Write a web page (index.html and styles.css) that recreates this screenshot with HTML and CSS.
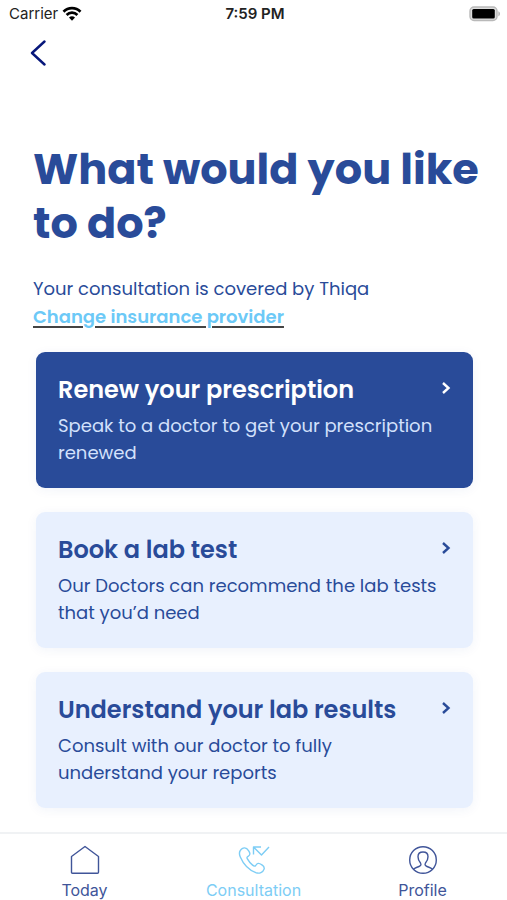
FILE: index.html
```html
<!DOCTYPE html>
<html lang="en">
<head>
<meta charset="utf-8">
<meta name="viewport" content="width=device-width, initial-scale=1">
<title>Consultation</title>
<link rel="stylesheet" href="styles.css">
</head>
<body>
<header>
  <div class="status">
    <div class="carrier">Carrier
      <svg width="20" height="16" viewBox="0 0 20 16" fill="none" stroke="#000" stroke-width="2.7" aria-hidden="true"><path d="M1.500 5.700C6.200.9 13.800.9 18.500 5.700"/><path d="M4.600 9c3-3.100 7.800-3.100 10.800 0"/><path d="M7 11.500c1.700-1.700 4.300-1.700 6 0l-3 3.300z" fill="#000" stroke="none"/></svg>
    </div>
    <div class="time">7:59 PM</div>
    <svg class="battery" width="32" height="16" viewBox="0 0 32 16" aria-hidden="true"><rect x="1" y="1" width="27" height="13.5" rx="4" fill="#ddd" stroke="#b9b9b9" stroke-width="1.4"/><rect x="3.2" y="3" width="22.6" height="9.5" rx="1.5"/><path d="M29.300 5.200c2.300.8 2.300 4.300 0 5.100z" fill="#b9b9b9"/></svg>
  </div>
  <button class="back" aria-label="Back"><svg width="16" height="26" viewBox="0 0 16 26" fill="none" stroke="#07177b" stroke-width="2.4" stroke-linecap="round" stroke-linejoin="round"><path d="M14.500 1.500 2 13l12.500 11.500"/></svg></button>
</header>
<main>
  <h1>What would you like to do?</h1>
  <p class="cover">Your consultation is covered by Thiqa<br><a href="#insurance">Change insurance provider</a></p>
  <div class="cards">
    <button class="card primary">
      <span class="title">Renew your prescription<svg class="chevron" width="10" height="14" viewBox="0 0 10 14"><path d="m2 2 5.500 5L2 12"/></svg></span>
      <span class="text">Speak to a doctor to get your prescription renewed</span>
    </button>
    <button class="card">
      <span class="title">Book a lab test<svg class="chevron" width="10" height="14" viewBox="0 0 10 14"><path d="m2 2 5.500 5L2 12"/></svg></span>
      <span class="text">Our Doctors can recommend the lab tests that you’d need</span>
    </button>
    <button class="card">
      <span class="title">Understand your lab results<svg class="chevron" width="10" height="14" viewBox="0 0 10 14"><path d="m2 2 5.500 5L2 12"/></svg></span>
      <span class="text">Consult with our doctor to fully<br>understand your reports</span>
    </button>
  </div>
</main>
<nav>
  <a href="#today"><svg width="30" height="30" viewBox="0 0 30 30"><path d="M1.500 11.500 15 1.500l13.500 10v15.700q0 1-1 1h-25q-1 0-1-1z"/></svg>Today</a>
  <a href="#consultation" class="active"><svg width="32" height="30" viewBox="0 0 32 30"><path d="M5.200 3.200C1.800 4.800.6 8 2.300 12c3 7 8.800 13 15.500 15.700 3.500 1.300 7.300-.4 8.300-3.600.6-2-.5-3.200-2.200-4.300-3.400-2.300-4.700-1.700-6.200.7-.7 1-1.700.8-3.100-.4-2.500-2.100-4-4-5.200-6.200-.7-1.200-.5-1.900.7-2.600 2.300-1.400 2.200-3 .6-5.500C9.100 3.300 7.400 2.300 5.200 3.200z"/><path d="M15.500 9.500V2H23M15.500 2l8 8L31 2"/></svg>Consultation</a>
  <a href="#profile"><svg width="30" height="30" viewBox="0 0 30 30"><circle cx="15" cy="15" r="13.300"/><path d="M5.500 24.300c1.500-1.600 3.500-2 5.500-2.800 2-.8 2.400-2 1.500-3.500-1.700-2-2.500-4-2.500-6.300C10 8.800 12 7 15 7s5 1.800 5 4.700c0 2.300-.8 4.300-2.500 6.300-.9 1.500-.5 2.700 1.500 3.500 2 .8 4 1.200 5.500 2.800"/></svg>Profile</a>
</nav>
</body>
</html>
```
FILE: styles.css
```css
* { box-sizing: border-box; }
body {
  margin: 0;
  min-height: 100vh;
  display: flex;
  flex-direction: column;
  background: #fff;
  color: #294b99;
  font-family: Poppins, Inter, sans-serif;
}
button { border: 0; background: none; font: inherit; color: inherit; cursor: pointer; }
svg { display: block; flex: none; }
.status {
  display: grid;
  grid-template-columns: 1fr auto 1fr;
  align-items: center;
  height: 28px;
  padding: 0 6px 0 9px;
  color: #222;
  font: 15px/28px Inter, sans-serif;
}
.carrier { display: flex; align-items: center; gap: 4px; }
.time { font-weight: 600; }
.battery { justify-self: end; }
.back { display: block; margin: 12px 0 0 30px; padding: 0; }
main { flex: 1; padding: 76px 24px 24px 33px; }
h1 { margin: 0 0 25px; font-size: 43px; line-height: 54px; font-weight: 700; }
.cover { margin: 0 0 21px; font-size: 18px; line-height: 28px; }
.cover a {
  color: #6cc9f7;
  font-weight: 600;
  text-decoration: underline #444 2px;
  text-underline-offset: 3px;
}
.cards { display: grid; gap: 24px; margin: 0 10px 0 3px; }
.card {
  display: block;
  width: 100%;
  padding: 20px 22px 22px;
  border-radius: 9px;
  background: #e8f0fe;
  box-shadow: 0 2px 12px rgba(41, 75, 153, 0.06);
  text-align: left;
}
.title {
  display: flex;
  justify-content: space-between;
  align-items: flex-start;
  margin-bottom: 4px;
  font-size: 24px;
  line-height: 36px;
  font-weight: 600;
}
.text { display: block; font-size: 18px; line-height: 27px; }
.chevron { margin-top: 9px; fill: none; stroke: currentColor; stroke-width: 2.4; }
.primary { background: #294b99; color: #fff; }
.primary .text { color: #d3e1fc; }
nav {
  position: sticky;
  bottom: 0;
  display: grid;
  grid-template-columns: repeat(3, 1fr);
  height: 68px;
  padding-top: 11px;
  background: #fff;
  border-top: 2px solid #f0f2f4;
}
nav a {
  display: flex;
  flex-direction: column;
  align-items: center;
  gap: 5px;
  color: #405599;
  font: 16px/20px Inter, sans-serif;
  text-decoration: none;
}
nav .active { color: #7dcdf5; }
nav svg { fill: none; stroke: currentColor; stroke-width: 1.4; stroke-linejoin: round; }
```
